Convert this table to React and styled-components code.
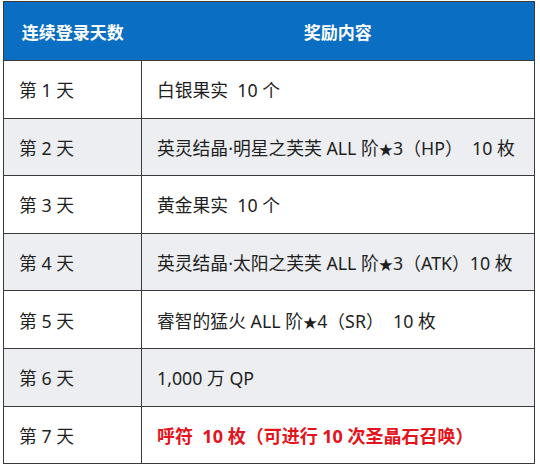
import { createGlobalStyle } from "styled-components";
import styled from "styled-components";

const GlobalStyle = createGlobalStyle`
  html, body {
    margin: 0;
    padding: 0;
    background: #fff;
  }
  body {
    font-family: "Noto Sans", "Noto Sans CJK SC", sans-serif;
  }
`;

const Wrap = styled.div`
  padding: 1px 5px 0 3px;
`;

const Table = styled.table`
  width: 532px;
  border-collapse: collapse;
  border: 1px solid #3a3a3a;
  table-layout: fixed;
`;

const HeadCell = styled.th`
  background: #0a6fc2;
  color: #fff;
  font-family: "Noto Sans CJK SC", sans-serif;
  font-size: 17px;
  font-weight: bold;
  height: 58px;
  text-align: center;
  padding: 0;
  border-bottom: 1px solid #3a3a3a;
`;

const Row = styled.tr`
  height: 57.6px;
  background: ${(p) => (p.$shade ? "#eceef1" : "#fff")};
`;

const Cell = styled.td`
  border: 1px solid #3a3a3a;
  padding: 0 0 0 15px;
  font-size: ${(p) => (p.$hot ? "18px" : "17.8px")};
  color: ${(p) => (p.$hot ? "#e3141c" : "#1f1f1f")};
  font-weight: ${(p) => (p.$hot ? "bold" : "normal")};
  white-space: pre;
`;

const Star = styled.span`
  font-size: 0.8em;
`;

const rows = [
  { day: "第 1 天", reward: "白银果实  10 个" },
  { day: "第 2 天", reward: ["英灵结晶·明星之芙芙 ALL 阶", "3（HP）  10 枚"] },
  { day: "第 3 天", reward: "黄金果实  10 个" },
  { day: "第 4 天", reward: ["英灵结晶·太阳之芙芙 ALL 阶", "3（ATK）10 枚"] },
  { day: "第 5 天", reward: ["睿智的猛火 ALL 阶", "4（SR）  10 枚"] },
  { day: "第 6 天", reward: "1,000 万 QP" },
  { day: "第 7 天", reward: "呼符  10 枚（可进行 10 次圣晶石召唤）", hot: true },
];

export default function App() {
  return (
    <Wrap>
      <GlobalStyle />
      <Table>
        <colgroup>
          <col style={{ width: "138px" }} />
          <col />
        </colgroup>
        <thead>
          <tr>
            <HeadCell>连续登录天数</HeadCell>
            <HeadCell>奖励内容</HeadCell>
          </tr>
        </thead>
        <tbody>
          {rows.map((r, i) => (
            <Row key={r.day} $shade={i % 2 === 1}>
              <Cell>{r.day}</Cell>
              <Cell $hot={r.hot}>
                {Array.isArray(r.reward) ? (
                  <>
                    {r.reward[0]}
                    <Star>★</Star>
                    {r.reward[1]}
                  </>
                ) : (
                  r.reward
                )}
              </Cell>
            </Row>
          ))}
        </tbody>
      </Table>
    </Wrap>
  );
}
